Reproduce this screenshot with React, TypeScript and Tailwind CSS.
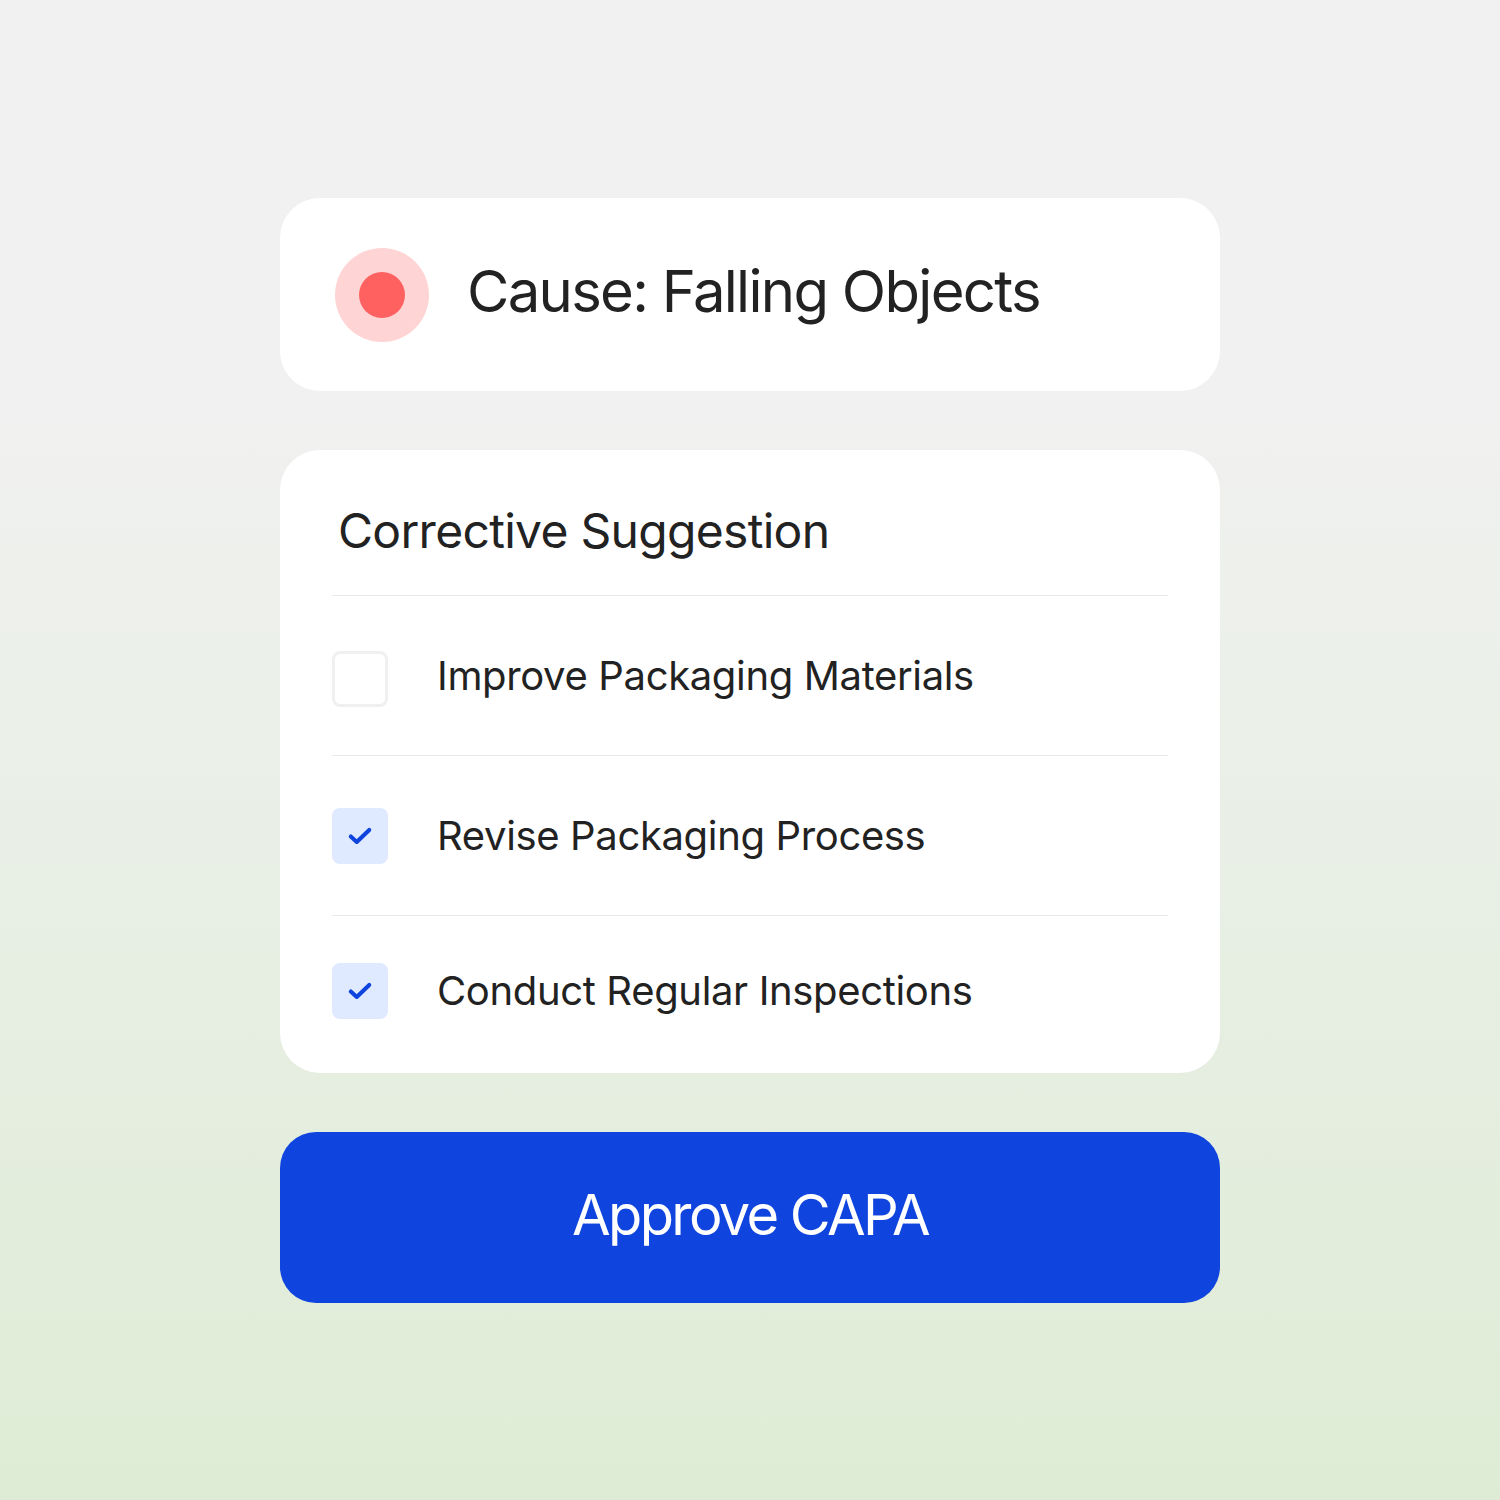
import React from 'react';

type Item = { label: string; done: boolean };

const items: Item[] = [
  { label: 'Improve Packaging Materials', done: false },
  { label: 'Revise Packaging Process', done: true },
  { label: 'Conduct Regular Inspections', done: true },
];

const Check = () => (
  <svg width="26" height="26" viewBox="0 0 24 24" fill="none" stroke="#0e44dd" strokeWidth="3.8" strokeLinecap="round" strokeLinejoin="round">
    <path d="M3.5 12.5l5.5 5L20.5 6.5" />
  </svg>
);

const App: React.FC = () => {
  return (
    <div
      className="w-[1500px] h-[1500px] bg-linear-to-b from-[#f1f1f1] from-[25%] to-[#deecd5] text-[#222222]"
      style={{ fontFamily: 'Inter, "Noto Sans", sans-serif' }}
    >
      <div className="w-[940px] mx-auto pt-[198px]">
        <div className="h-[193px] bg-white rounded-[40px] flex items-center px-[55px] gap-[38px]">
          <div className="w-[94px] h-[94px] rounded-full bg-[#ffd4d4] flex items-center justify-center">
            <div className="w-[46px] h-[46px] rounded-full bg-[#ff6161]" />
          </div>
          <span className="text-[58px] leading-none tracking-[-1.7px] pb-[8px]">Cause: Falling Objects</span>
        </div>

        <div className="mt-[59px] bg-white rounded-[40px] px-[52px] pt-[52px] pb-[8px]">
          <h2 className="text-[48px] leading-[58px] pl-[6px] mb-[35px] tracking-[-0.7px]">Corrective Suggestion</h2>
          {items.map((it, i) => (
            <div
              key={it.label}
              className={
                'border-t border-[#e9e9e9] flex items-center gap-[49px] ' +
                (i === items.length - 1 ? 'h-[150px]' : 'h-[160px]')
              }
            >
              {it.done ? (
                <div className="w-[56px] h-[56px] rounded-[8px] bg-[#dfe9ff] flex items-center justify-center">
                  <Check />
                </div>
              ) : (
                <div className="w-[56px] h-[56px] rounded-[8px] border-[3px] border-[#f0f0f0] mt-[6px]" />
              )}
              <span className="text-[40px] leading-none tracking-[-0.35px]">{it.label}</span>
            </div>
          ))}
        </div>

        <button className="mt-[59px] w-full h-[171px] rounded-[36px] bg-[#0f45de] text-white text-[56px] leading-none tracking-[-2.6px] pb-[6px]">
          Approve CAPA
        </button>
      </div>
    </div>
  );
};

export default App;
